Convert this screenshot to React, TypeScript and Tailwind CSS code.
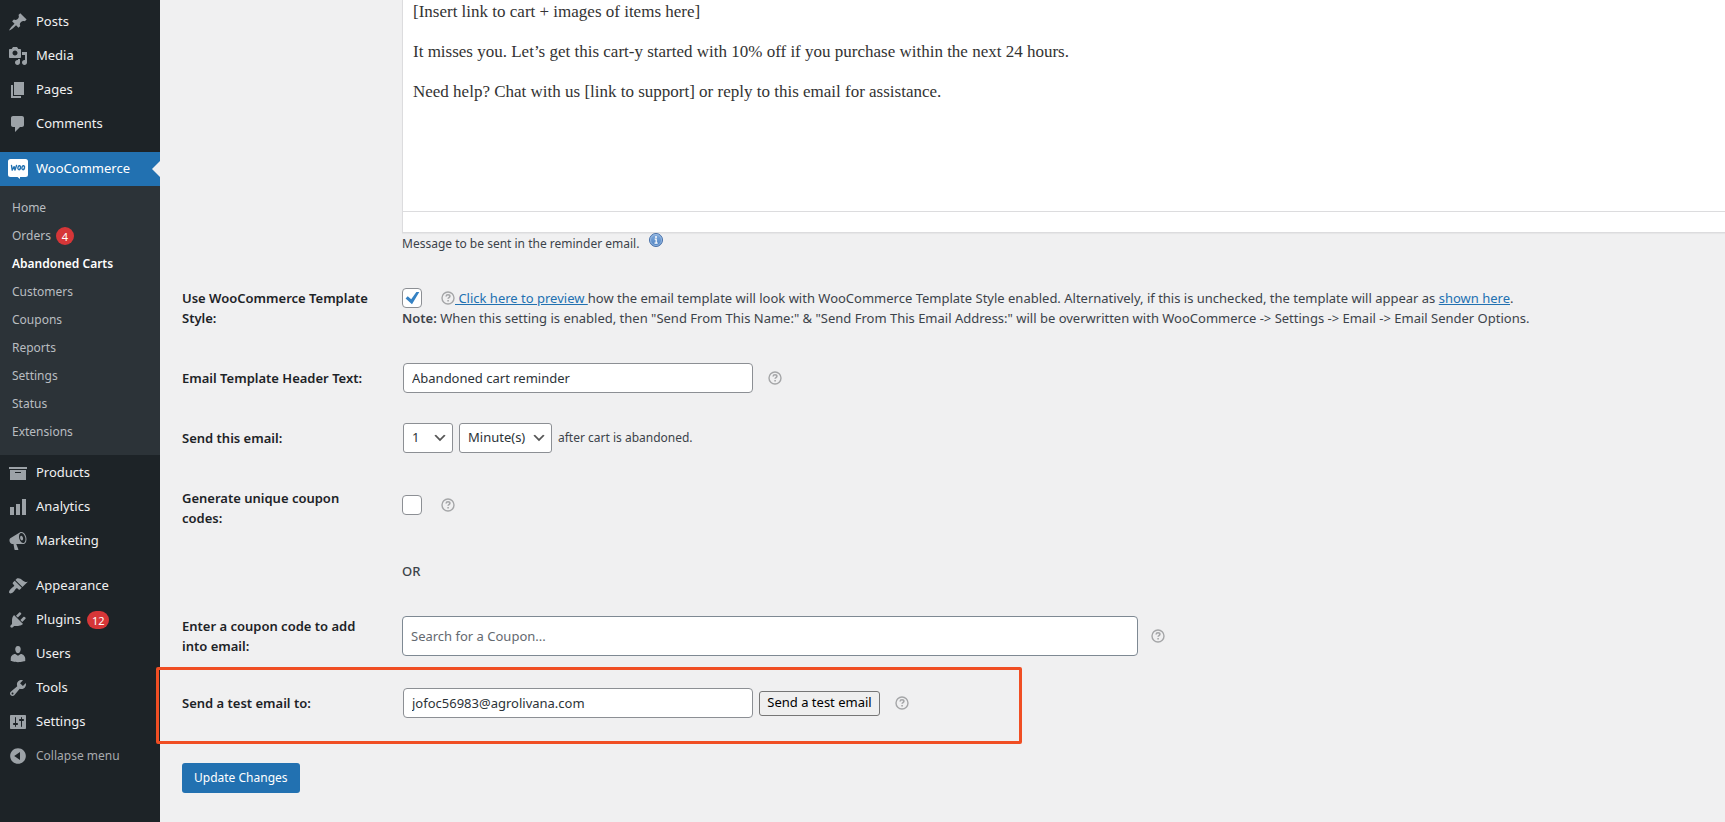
import type { ReactNode } from "react";

const ICONS: Record<string, string> = {
  posts:
    "M10.44 3.02l1.82-1.82 6.36 6.35-1.83 1.82c-1.05-.68-2.48-.57-3.41.36l-.75.75c-.92.93-1.04 2.35-.35 3.41l-1.83 1.82-2.41-2.41-2.8 2.79c-.42.42-3.38 2.71-3.8 2.29s1.86-3.39 2.28-3.81l2.79-2.79L4.1 9.36l1.83-1.82c1.05.69 2.48.57 3.4-.36l.75-.75c.93-.92 1.05-2.35.36-3.41z",
  media:
    "M13 11V4c0-.55-.45-1-1-1h-1.67L9 1H5L3.67 3H2c-.55 0-1 .45-1 1v7c0 .55.45 1 1 1h10c.55 0 1-.45 1-1zM7 4.5c1.38 0 2.5 1.12 2.5 2.5S8.38 9.5 7 9.5 4.5 8.38 4.5 7 5.62 4.5 7 4.5zM14 6h5v10.5c0 1.38-1.12 2.5-2.5 2.5S14 17.88 14 16.5s1.12-2.5 2.5-2.5c.17 0 .34.02.5.05V9h-3V6zm-4 8.05V13h2v3.5c0 1.38-1.12 2.5-2.5 2.5S7 17.88 7 16.5 8.12 14 9.5 14c.17 0 .34.02.5.05z",
  pages: "M6 15V2h10v13H6zm-1 1h8v2H3V5h2v11z",
  comments: "M5 2h9c1.1 0 2 .9 2 2v7c0 1.1-.9 2-2 2h-2l-5 5v-5H5c-1.1 0-2-.9-2-2V4c0-1.1.9-2 2-2z",
  products: "M19 4v2H1V4h18zM2 7h16v10H2V7zm11 3V9H7v1h6z",
  analytics: "M18 18V2h-4v16h4zm-6 0V7H8v11h4zm-6 0v-8H2v8h4z",
  marketing:
    "M18.15 5.94c.46 1.62.38 3.22-.02 4.48-.42 1.28-1.26 2.18-2.3 2.48-.16.06-.26.06-.4.06-.06.02-.12.02-.18.02-.06.02-.14.02-.22.02h-6.8l2.22 5.5c.02.14-.06.26-.14.34-.08.1-.24.16-.34.16H6.95c-.1 0-.26-.06-.34-.16-.08-.08-.16-.2-.14-.34l-1-5.5H4.25l-.02-.02c-.5.06-1.08-.18-1.54-.62s-.88-1.08-1.06-1.88c-.24-.8-.2-1.56-.02-2.2.18-.62.58-1.08 1.06-1.3l.02-.02 9-5.4c.1-.06.18-.1.24-.16.06-.04.14-.08.24-.12.16-.08.28-.12.5-.18 1.04-.3 2.24.1 3.22.98s1.84 2.24 2.26 3.86zm-2.58 5.98h-.02c.4-.1.74-.34 1.04-.7.58-.7.86-1.76.86-3.04 0-.64-.1-1.3-.28-1.98-.34-1.36-1.02-2.5-1.78-3.24s-1.68-1.1-2.46-.88c-.82.22-1.4.96-1.7 2-.32 1.04-.28 2.36.06 3.72.38 1.36 1 2.5 1.8 3.24.78.74 1.62 1.1 2.48.88zm-2.54-7.08c.22-.04.42-.02.62.04.38.16.76.48 1.02 1s.42 1.2.42 1.78c0 .3-.04.56-.12.8-.18.48-.44.84-.86.94-.34.1-.8-.06-1.14-.4s-.64-.86-.78-1.5c-.18-.62-.12-1.24.02-1.72s.48-.84.82-.94z",
  appearance:
    "M14.48 11.06L7.41 3.99l1.5-1.5c.5-.56 2.3-.47 3.51.32 1.21.8 1.43 1.28 2.91 2.1 1.18.64 2.45 1.26 4.45.85zm-.71.71L6.7 4.7 4.93 6.47c-.39.39-.39 1.02 0 1.41l1.06 1.06c.39.39.39 1.03 0 1.42-.6.6-1.43 1.11-2.21 1.69-.35.26-.7.53-1.01.84C1.43 14.23.4 16.08 1.4 17.07c.99 1 2.84-.03 4.18-1.36.31-.31.58-.66.85-1.02.57-.78 1.08-1.61 1.69-2.21.39-.39 1.02-.39 1.41 0l1.06 1.06c.39.39 1.02.39 1.41 0z",
  plugins:
    "M13.11 4.36L9.87 7.6 8 5.73l3.24-3.24c.35-.34 1.05-.2 1.56.32.52.51.66 1.21.31 1.55zm-8 1.77l.91-1.12 9.01 9.01-1.19.84c-.71.71-2.63 1.16-3.82 1.16H6.14L4.9 17.26c-.59.59-1.54.59-2.12 0-.59-.58-.59-1.53 0-2.12l1.24-1.24v-3.88c0-1.13.4-3.19 1.09-3.89zm7.26 3.97l3.24-3.24c.34-.35 1.04-.21 1.55.31.52.51.66 1.21.31 1.55l-3.24 3.25z",
  users:
    "M10 9.25c-2.27 0-2.73-3.44-2.73-3.44C7 4.02 7.82 2 9.97 2c2.16 0 2.98 2.02 2.71 3.81 0 0-.41 3.44-2.68 3.44zm0 2.57L12.72 10c2.39 0 4.52 2.33 4.52 4.53v2.49s-3.65 1.13-7.24 1.13c-3.65 0-7.24-1.13-7.24-1.13v-2.49c0-2.25 1.94-4.48 4.47-4.48z",
  tools:
    "M16.68 9.77c-1.34 1.34-3.3 1.67-4.95.99l-5.41 6.52c-.99.99-2.59.99-3.58 0s-.99-2.59 0-3.57l6.52-5.42c-.68-1.65-.35-3.61.99-4.95 1.28-1.28 3.12-1.62 4.72-1.06l-2.89 2.89 2.82 2.82 2.86-2.87c.53 1.58.18 3.39-1.08 4.65zM3.81 16.21c.4.39 1.04.39 1.43 0 .4-.4.4-1.04 0-1.43-.39-.4-1.03-.4-1.43 0-.39.39-.39 1.03 0 1.43z",
  settings:
    "M18 16V4c0-.55-.45-1-1-1H3c-.55 0-1 .45-1 1v12c0 .55.45 1 1 1h14c.55 0 1-.45 1-1zM8 11h1c.55 0 1 .45 1 1s-.45 1-1 1H8v1.500c0 .28-.22.5-.5.5s-.5-.22-.5-.5V13H6c-.55 0-1-.45-1-1s.45-1 1-1h1V5.500c0-.28.22-.5.5-.5s.5.22.5.5V11zm5-2h-1c-.55 0-1-.45-1-1s.45-1 1-1h1V5.500c0-.28.22-.5.5-.5s.5.22.5.5V7h1c.55 0 1 .45 1 1s-.45 1-1 1h-1v5.500c0 .28-.22.5-.5.5s-.5-.22-.5-.5V9z",
  collapse:
    "M10 2.16c4.33 0 7.84 3.51 7.84 7.84S14.33 17.84 10 17.84 2.16 14.33 2.16 10 5.71 2.16 10 2.16zm2 11.72V6.12L6.18 9.97z",
};

function MenuIcon({ name }: { name: string }) {
  return (
    <svg viewBox="0 0 20 20" className="size-5 shrink-0 fill-[#9ca2a7]" fillRule="evenodd" aria-hidden="true">
      <path d={ICONS[name]} />
    </svg>
  );
}

function WooIcon() {
  return (
    <svg viewBox="0 0 20 20" className="size-5 shrink-0" aria-hidden="true">
      <path fill="#fff" d="M2.500 0h15A2.500 2.500 0 0 1 20 2.500v13a2.500 2.500 0 0 1-2.500 2.500H12v2l-2.500-2h-7A2.500 2.500 0 0 1 0 15.500v-13A2.500 2.500 0 0 1 2.500 0z" />
      <g fill="none" stroke="#2271b1" strokeWidth="1.400" strokeLinecap="round" strokeLinejoin="round">
        <path d="M3.500 6.500l.7 4.600 1.900-3.400.9 3.400 1.500-4.600" />
        <ellipse cx="11.200" cy="8.700" rx="1.300" ry="2" transform="rotate(14 11.200 8.700)" />
        <ellipse cx="15.200" cy="8.700" rx="1.300" ry="2" transform="rotate(14 15.200 8.700)" />
      </g>
    </svg>
  );
}

function Count({ children }: { children: ReactNode }) {
  return (
    <span className="inline-flex h-[18px] min-w-[18px] items-center justify-center rounded-full bg-[#d63638] px-[5px] text-[11px] leading-none text-white">
      {children}
    </span>
  );
}

function MenuItem({ icon, label, count }: { icon: string; label: string; count?: number }) {
  return (
    <li>
      <a href="#" className="flex h-[34px] items-center gap-2 pl-2 text-[13px] text-[#f0f0f1]">
        <MenuIcon name={icon} />
        <span className="flex items-center gap-[6px]">
          {label}
          {count !== undefined && <Count>{count}</Count>}
        </span>
      </a>
    </li>
  );
}

const SUBMENU = [
  "Home",
  "Orders",
  "Abandoned Carts",
  "Customers",
  "Coupons",
  "Reports",
  "Settings",
  "Status",
  "Extensions",
];

function Sidebar() {
  return (
    <nav aria-label="Main menu" className="w-[160px] shrink-0 bg-[#1d2327] pt-[5px]">
      <ul>
        <MenuItem icon="posts" label="Posts" />
        <MenuItem icon="media" label="Media" />
        <MenuItem icon="pages" label="Pages" />
        <MenuItem icon="comments" label="Comments" />
      </ul>
      <div className="relative mt-[11px] bg-[#2271b1]">
        <a href="#" className="flex h-[34px] items-center gap-2 pl-2 text-[13px] text-white">
          <WooIcon />
          <span>WooCommerce</span>
        </a>
        <span className="absolute top-[9px] right-0 border-y-8 border-r-8 border-y-transparent border-r-[#f0f0f1]" />
      </div>
      <ul className="bg-[#2c3338] pt-2 pb-[9px]">
        {SUBMENU.map((label) => (
          <li key={label}>
            <a
              href="#"
              className={
                label === "Abandoned Carts"
                  ? "flex h-7 items-center pl-3 text-[12px] font-semibold text-white"
                  : "flex h-7 items-center gap-[5px] pl-3 text-[12px] text-[#b9bdc0]"
              }
            >
              {label}
              {label === "Orders" && <Count>4</Count>}
            </a>
          </li>
        ))}
      </ul>
      <ul className="pt-px">
        <MenuItem icon="products" label="Products" />
        <MenuItem icon="analytics" label="Analytics" />
        <MenuItem icon="marketing" label="Marketing" />
      </ul>
      <ul className="mt-[11px]">
        <MenuItem icon="appearance" label="Appearance" />
        <MenuItem icon="plugins" label="Plugins" count={12} />
        <MenuItem icon="users" label="Users" />
        <MenuItem icon="tools" label="Tools" />
        <MenuItem icon="settings" label="Settings" />
        <li>
          <button type="button" className="flex h-[34px] items-center gap-2 pl-2 text-[12px] text-[#a7aaad]">
            <MenuIcon name="collapse" />
            Collapse menu
          </button>
        </li>
      </ul>
    </nav>
  );
}

function Help() {
  return (
    <svg viewBox="0 0 14 14" className="size-[14px] shrink-0" fill="none" stroke="#a5a6a8" aria-hidden="true">
      <circle cx="7" cy="7" r="6" strokeWidth="1.400" />
      <path d="M5.100 5.500c.1-1.100.9-1.700 1.900-1.700 1.100 0 1.900.6 1.900 1.500 0 1.300-1.800 1.300-1.800 2.500" strokeWidth="1.600" />
      <path d="M7.100 8.900v1.500" strokeWidth="1.600" />
    </svg>
  );
}

function InfoIcon() {
  return (
    <svg viewBox="0 0 14 14" className="size-[14px] shrink-0" aria-hidden="true">
      <defs>
        <linearGradient id="info" x1="0" y1="0" x2="0" y2="1">
          <stop offset="0" stopColor="#86aede" />
          <stop offset="1" stopColor="#4a7fc0" />
        </linearGradient>
      </defs>
      <circle cx="7" cy="7" r="6.500" fill="url(#info)" stroke="#4870a8" />
      <circle cx="7" cy="7" r="5.500" fill="none" stroke="#a9c5e8" strokeWidth=".7" />
      <circle cx="7" cy="4" r="1" fill="#fff" />
      <path d="M5.700 6.200H7.200V10M5.500 10.200h3.200" stroke="#fff" strokeWidth="1.200" fill="none" />
    </svg>
  );
}

function CheckBox({ id, checked }: { id: string; checked?: boolean }) {
  return (
    <span className="relative size-5 shrink-0">
      <input
        id={id}
        type="checkbox"
        defaultChecked={checked}
        className="peer block size-5 appearance-none rounded border border-[#8c8f94] bg-white"
      />
      <svg
        viewBox="0 0 20 20"
        className="pointer-events-none absolute inset-0 hidden size-5 fill-[#3582c4] peer-checked:block"
        aria-hidden="true"
      >
        <path d="M14.400 4h2.900L10 16.300 3.600 10.400l2.100-2.200 3.500 3z" />
      </svg>
    </span>
  );
}

function Select({ id, label, value, options, width }: { id: string; label: string; value: string; options: string[]; width: string }) {
  return (
    <span className={"relative block " + width}>
      <select
        id={id}
        aria-label={label}
        defaultValue={value}
        className="block h-[30px] w-full appearance-none rounded-[3px] border border-[#8c8f94] bg-white pl-2 text-[13px] text-[#2c3338]"
      >
        {options.map((o) => (
          <option key={o}>{o}</option>
        ))}
      </select>
      <svg viewBox="0 0 20 20" className="pointer-events-none absolute top-[7px] right-[5px] size-4 fill-[#555]" aria-hidden="true">
        <path d="M5 6l5 5 5-5 2 1-7 7-7-7 2-1z" />
      </svg>
    </span>
  );
}

function Row({ label, htmlFor, className, children }: { label?: string; htmlFor?: string; className?: string; children: ReactNode }) {
  return (
    <div className={"relative grid grid-cols-[200px_minmax(0,1fr)] gap-x-5 pl-[22px] " + (className ?? "")}>
      <div>
        {label && (
          <label htmlFor={htmlFor} className="block text-[13px] leading-5 font-semibold text-[#1d2327]">
            {label}
          </label>
        )}
      </div>
      {children}
    </div>
  );
}

const MESSAGE = `[Insert link to cart + images of items here]

It misses you. Let’s get this cart-y started with 10% off if you purchase within the next 24 hours.

Need help? Chat with us [link to support] or reply to this email for assistance.`;

const FIELD = "h-[30px] w-[350px] rounded border border-[#8c8f94] bg-white px-2 text-[13px] text-[#2c3338]";

export default function App() {
  return (
    <div className="flex min-h-screen overflow-hidden bg-[#f0f0f1] font-['Noto_Sans','Open_Sans',sans-serif] text-[13px] text-[#3c434a]">
      <Sidebar />
      <main className="min-w-0 flex-1">
        <form onSubmit={(e) => e.preventDefault()}>
          <Row>
            <div>
              <div className="border-b border-l border-[#dcdcde] bg-white shadow-[0_1px_1px_rgba(0,0,0,0.04)]">
                <textarea
                  aria-label="Message"
                  defaultValue={MESSAGE}
                  className="block h-[211px] w-full resize-none bg-white px-[10px] pt-[2px] font-['Liberation_Serif',serif] text-[17px] leading-5 text-[#333] outline-none"
                />
                <div className="h-[21px] border-t border-[#dcdcde]" />
              </div>
              <div className="flex h-5 items-start gap-[10px] text-[12px] leading-5">
                <span className="pt-px">Message to be sent in the reminder email.</span>
                <InfoIcon />
              </div>
            </div>
          </Row>

          <Row label="Use WooCommerce Template Style:" htmlFor="wc-style" className="mt-[35px]">
            <div className="leading-5">
              <div className="flex h-5 items-center">
                <CheckBox id="wc-style" checked />
                <span className="flex items-center pl-[19px]">
                  <Help />
                  <p className="whitespace-pre">
                    <a href="#" className="text-[#2271b1] underline">
                      {" Click here to preview "}
                    </a>
                    how the email template will look with WooCommerce Template Style enabled. Alternatively, if this is
                    unchecked, the template will appear as{" "}
                    <a href="#" className="text-[#2271b1] underline">
                      shown here
                    </a>
                    .
                  </p>
                </span>
              </div>
              <p>
                <strong className="font-semibold">Note:</strong> When this setting is enabled, then "Send From This
                Name:" &amp; "Send From This Email Address:" will be overwritten with WooCommerce -&gt; Settings -&gt;
                Email -&gt; Email Sender Options.
              </p>
            </div>
          </Row>

          <Row label="Email Template Header Text:" htmlFor="header-text" className="mt-[35px] items-center">
            <div className="flex items-center gap-[15px] pl-px">
              <input id="header-text" type="text" defaultValue="Abandoned cart reminder" className={FIELD} />
              <Help />
            </div>
          </Row>

          <Row label="Send this email:" htmlFor="send-after" className="mt-[30px] items-center">
            <div className="flex items-center gap-[6px] pl-px">
              <Select id="send-after" label="Delay" value="1" options={["1", "2", "3"]} width="w-[50px]" />
              <Select
                id="send-unit"
                label="Unit"
                value="Minute(s)"
                options={["Minute(s)", "Hour(s)", "Day(s)"]}
                width="w-[93px]"
              />
              <span className="text-[12px]">after cart is abandoned.</span>
            </div>
          </Row>

          <Row label="Generate unique coupon codes:" htmlFor="unique-codes" className="mt-[35px]">
            <div className="flex items-center gap-[19px] self-start pt-[7px]">
              <CheckBox id="unique-codes" />
              <Help />
            </div>
          </Row>

          <Row className="mt-[30px]">
            <p className="py-[3px] leading-5 font-medium">OR</p>
          </Row>

          <Row label="Enter a coupon code to add into email:" htmlFor="coupon" className="mt-8 items-center">
            <div className="flex items-center gap-[13px]">
              <input
                id="coupon"
                type="search"
                placeholder="Search for a Coupon..."
                className="h-10 w-full max-w-[736px] rounded border border-[#7e8993] bg-white px-2 text-[13px] placeholder:text-[#646970]"
              />
              <Help />
            </div>
          </Row>

          <Row label="Send a test email to:" htmlFor="test-email" className="mt-8 items-center">
            <div className="flex items-center pl-px">
              <input id="test-email" type="email" defaultValue="jofoc56983@agrolivana.com" className={FIELD} />
              <button
                type="button"
                className="ml-[6px] h-[25px] w-[121px] rounded-[3px] border border-[#767676] bg-[#efefef] text-[13px] whitespace-nowrap text-black"
              >
                Send a test email
              </button>
              <span className="pl-[15px]">
                <Help />
              </span>
            </div>
            <div className="pointer-events-none absolute -top-[21px] -left-1 h-[77px] w-[866px] rounded-[2px] border-[3px] border-[#f04e23]" />
          </Row>

          <div className="mt-[45px] pb-7 pl-[22px]">
            <button type="submit" className="h-[30px] rounded-[3px] bg-[#2271b1] px-3 text-[12px] text-white">
              Update Changes
            </button>
          </div>
        </form>
      </main>
    </div>
  );
}
